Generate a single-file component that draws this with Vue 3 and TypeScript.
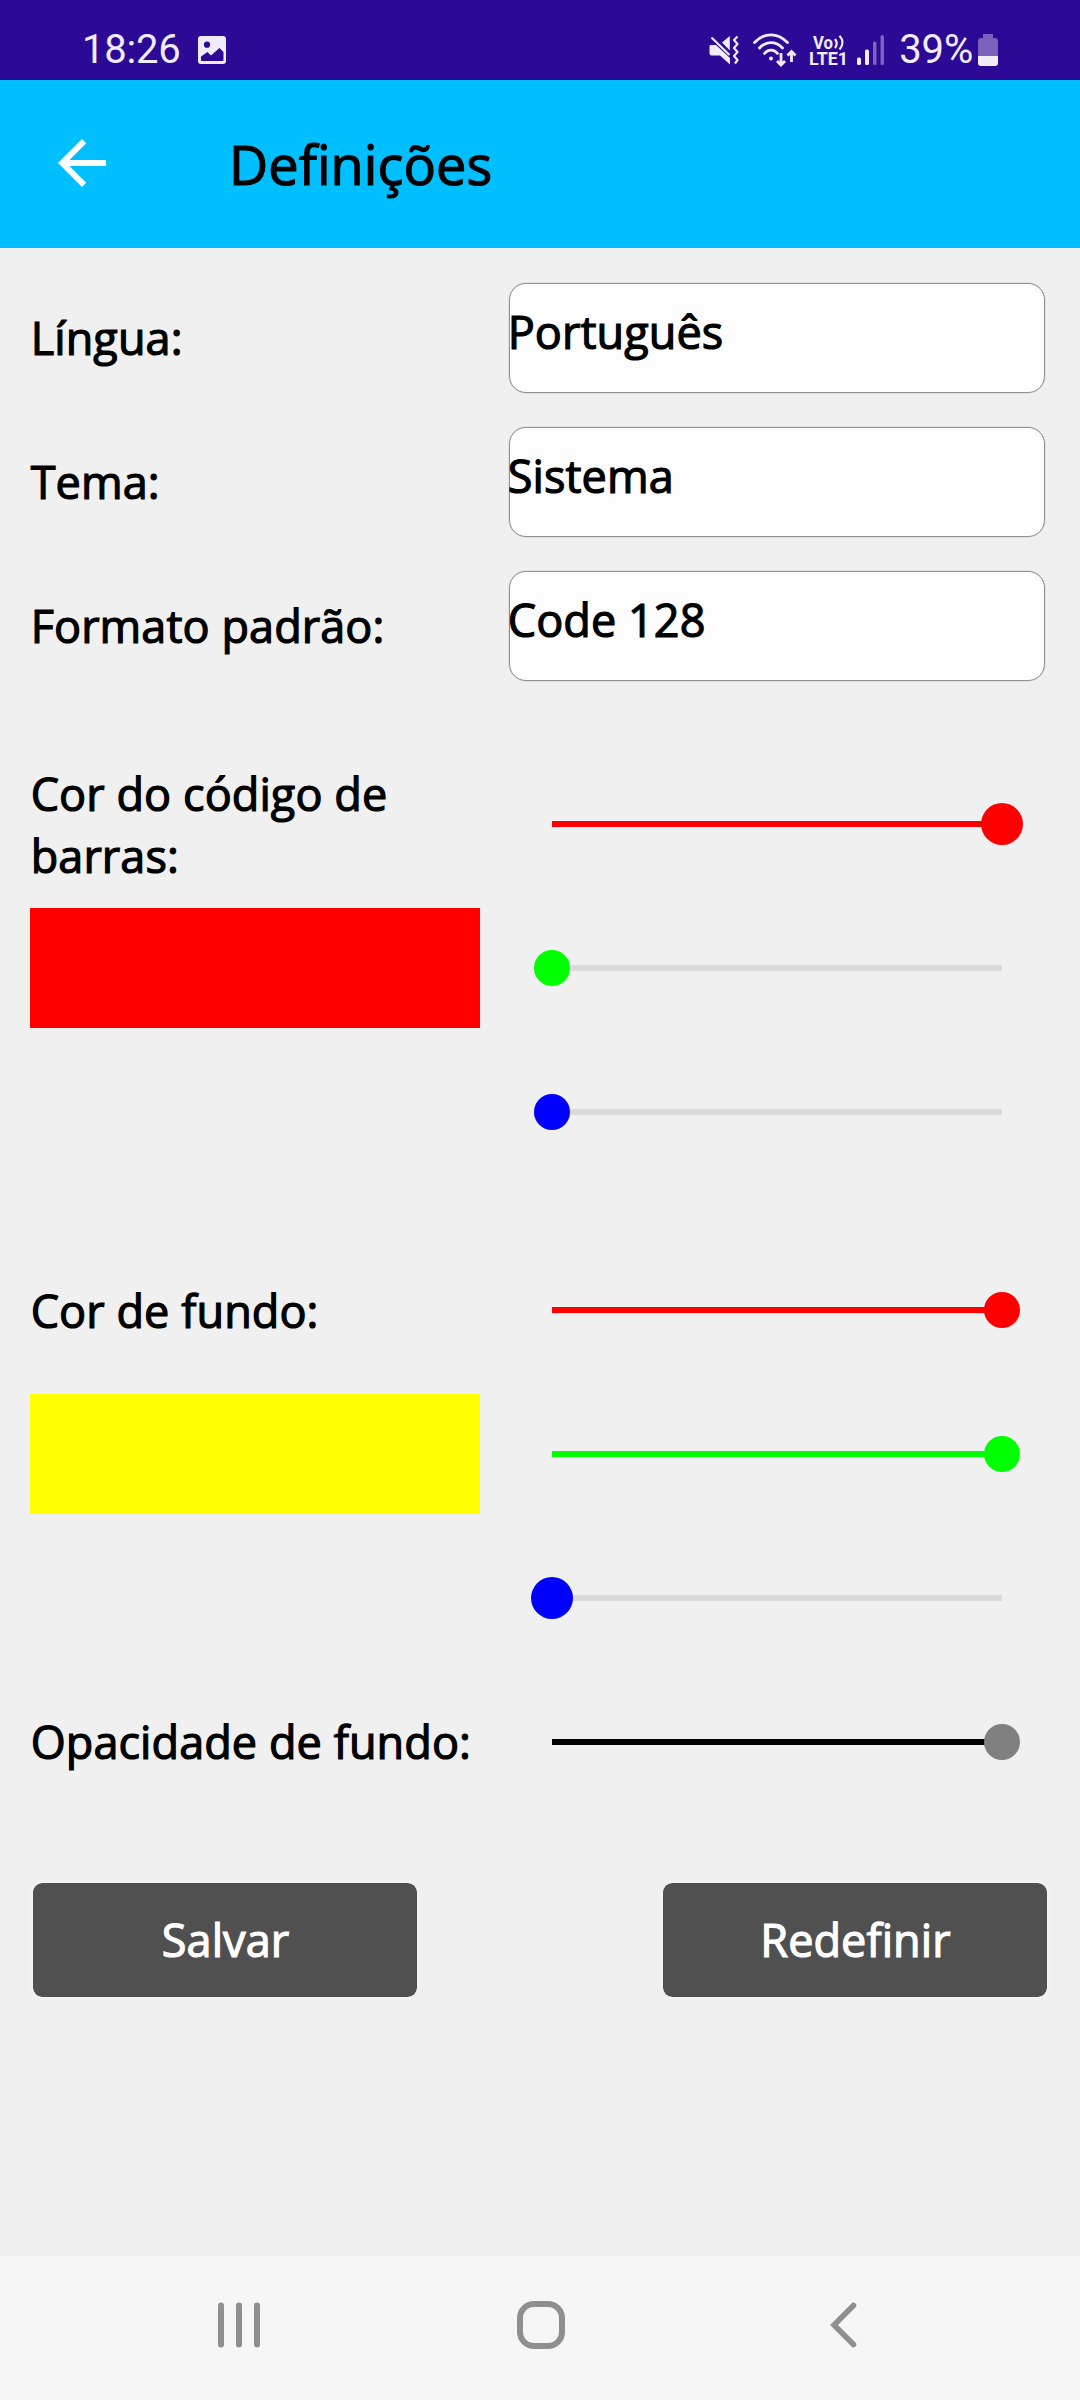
<script setup lang="ts">
interface Choice {
  label: string
  value: string
}

interface Channel {
  color: string
  track: string
  level: number
  active?: boolean
}

interface ColorGroup {
  label: string
  swatch: string
  channels: Channel[]
}

const choices: Choice[] = [
  { label: 'Língua:', value: 'Português' },
  { label: 'Tema:', value: 'Sistema' },
  { label: 'Formato padrão:', value: 'Code 128' },
]

const groups: ColorGroup[] = [
  {
    label: 'Cor do código de barras:',
    swatch: '#ff0000',
    channels: [
      { color: '#ff0000', track: '#ff0000', level: 100, active: true },
      { color: '#00ff00', track: '#00ff00', level: 0 },
      { color: '#0000ff', track: '#0000ff', level: 0 },
    ],
  },
  {
    label: 'Cor de fundo:',
    swatch: '#ffff00',
    channels: [
      { color: '#ff0000', track: '#ff0000', level: 100 },
      { color: '#00ff00', track: '#00ff00', level: 100 },
      { color: '#0000ff', track: '#0000ff', level: 0, active: true },
    ],
  },
]

const opacity: Channel = { color: '#808080', track: '#000000', level: 100 }
</script>

<template>
  <div class="screen">
    <div class="status">
      <span class="clock">18:26</span>
      <svg class="photo" width="28" height="28" viewBox="0 0 28 28">
        <path
          fill="#f0ecfb"
          fill-rule="evenodd"
          d="M3 0H25Q28 0 28 3V25Q28 28 25 28H3Q0 28 0 25V3Q0 0 3 0ZM9 5.6A3.1 3.1 0 1 0 9 11.8A3.1 3.1 0 1 0 9 5.6ZM3 20.5V24Q3 25 4 25H24.500Q25.500 25 25.500 24V16L21.500 12L13 19.500L9.500 16Z"
        />
      </svg>
      <div class="spacer"></div>
      <svg class="mute" width="30" height="30" viewBox="0 0 30 30">
        <g fill="#f0ecfb">
          <path d="M1.500 10H7L21 23V29.500L11 20.500H2.500Q0.500 20.500 0.500 18.500V12Q0.500 10 1.500 10Z" />
          <path d="M20.800 1V15.500L13 7.500Z" />
        </g>
        <path d="M2.500 2.500L20.500 20" fill="none" stroke="#f0ecfb" stroke-width="2.200" />
        <path
          d="M28.500 1.500L25 5L28.500 9L25 13L28.500 17L25 21L28.500 25L26 28.500"
          fill="none"
          stroke="#f0ecfb"
          stroke-width="2.200"
          stroke-linejoin="round"
        />
      </svg>
      <svg class="wifi" width="46" height="34" viewBox="0 0 46 34">
        <g fill="none" stroke="#f0ecfb" stroke-width="2.800" stroke-linecap="round">
          <path d="M2.500 9.500Q10 1.800 19 1.800T35.500 9.500" />
          <path d="M7.500 15Q12.500 9.600 19 9.600T30.500 15" />
          <path d="M12.500 20.500Q15 17.200 19 17.200T25.500 20.500" />
          <path d="M29 20V31.500M25 28L29 32L33 28M39.500 29V19M35.500 22.500L39.500 18.500L43.500 22.500" stroke-linecap="butt" />
        </g>
        <circle cx="19" cy="25.500" r="2" fill="#f0ecfb" />
      </svg>
      <svg class="volte" width="38" height="34" viewBox="0 0 38 34">
        <g fill="#f0ecfb" font-family="Roboto, sans-serif" font-weight="700" font-size="17.500">
          <text x="3" y="14.500" textLength="20" lengthAdjust="spacingAndGlyphs">Vo</text>
          <text x="-1" y="31.300" textLength="39" lengthAdjust="spacingAndGlyphs">LTE1</text>
        </g>
        <path d="M25 5Q28.500 9.500 25 14M29.500 1.800Q35.500 8.500 29.500 15.500" fill="none" stroke="#f0ecfb" stroke-width="2.200" />
      </svg>
      <svg class="signal" width="28" height="30" viewBox="0 0 28 30">
        <g fill="#f0ecfb">
          <rect x="0" y="22.500" width="4" height="7.500" rx="1.500" />
          <rect x="8" y="14.500" width="4" height="15.500" rx="1.500" />
          <rect x="16" y="6.500" width="3.500" height="23.500" rx="1.500" opacity=".4" />
          <rect x="23.500" y="0" width="3.500" height="30" rx="1.500" opacity=".4" />
        </g>
      </svg>
      <span class="percent">39%</span>
      <svg class="battery" width="20" height="32" viewBox="0 0 20 32">
        <path d="M5 0H15V4H17Q20 4 20 7V22H0V7Q0 4 3 4H5Z" fill="#7a61bd" />
        <path d="M0 22H20V29Q20 32 17 32H3Q0 32 0 29Z" fill="#f0ecfb" />
      </svg>
    </div>

    <header class="header">
      <svg class="back" width="72" height="72" viewBox="0 0 24 24">
        <path fill="#fff" d="M20 11H7.830l5.590-5.590L12 4l-8 8 8 8 1.410-1.410L7.830 13H20z" />
      </svg>
      <h1 class="title">Definições</h1>
    </header>

    <main class="content">
      <div v-for="choice in choices" :key="choice.label" class="row">
        <div class="label">{{ choice.label }}</div>
        <div class="field"><span>{{ choice.value }}</span></div>
      </div>

      <section v-for="group in groups" :key="group.label" class="group">
        <div v-for="(channel, i) in group.channels" :key="i" class="row">
          <div v-if="i === 0" class="label heading">{{ group.label }}</div>
          <div v-else-if="i === 1" class="swatch" :style="{ background: group.swatch }"></div>
          <div v-else class="label"></div>
          <div class="slider">
            <div class="fill" :style="{ width: channel.level + '%', background: channel.track }"></div>
            <div
              class="knob"
              :class="{ active: channel.active }"
              :style="{ left: channel.level + '%', background: channel.color }"
            ></div>
          </div>
        </div>
      </section>

      <div class="row">
        <div class="label">Opacidade de fundo:</div>
        <div class="slider">
          <div class="fill" :style="{ width: opacity.level + '%', background: opacity.track }"></div>
          <div class="knob" :style="{ left: opacity.level + '%', background: opacity.color }"></div>
        </div>
      </div>

      <div class="actions">
        <button class="button">Salvar</button>
        <button class="button">Redefinir</button>
      </div>
    </main>

    <nav class="nav">
      <svg class="recents" width="42" height="46" viewBox="0 0 42 46">
        <path d="M3 3.500V42.500M21 3.500V42.500M39 3.500V42.500" stroke="#8f8f8f" stroke-width="6" stroke-linecap="round" />
      </svg>
      <svg class="home" width="48" height="48" viewBox="0 0 48 48">
        <rect x="3" y="3" width="42" height="42" rx="14" fill="none" stroke="#8f8f8f" stroke-width="6" />
      </svg>
      <svg class="prev" width="28" height="46" viewBox="0 0 28 46">
        <path d="M23.500 3.500L4 23L23.500 42.500" fill="none" stroke="#8f8f8f" stroke-width="5.600" stroke-linecap="round" />
      </svg>
    </nav>
  </div>
</template>

<style>
body {
  margin: 0;
  background: #f0f0f0;
}
</style>

<style scoped>
.screen {
  display: flex;
  flex-direction: column;
  width: 1080px;
  height: 2400px;
  background: #f0f0f0;
  color: #000;
  font-family: 'Open Sans', 'Noto Sans', sans-serif;
  font-size: 45px;
  line-height: 61.3px;
  letter-spacing: 0.08px;
  font-variant-ligatures: none;
  -webkit-text-stroke: 1.2px currentColor;
}

.status {
  display: flex;
  box-sizing: border-box;
  height: 80px;
  padding: 0 82px;
  background: #2c0a96;
  color: #f0ecfb;
  font-family: Roboto, sans-serif;
  font-size: 40px;
  line-height: 47px;
  letter-spacing: -0.2px;
  -webkit-text-stroke: 0;
}

.status svg {
  flex: none;
  letter-spacing: 0;
}

.clock,
.percent {
  margin-top: 26px;
}

.photo {
  margin: 36px 0 0 17px;
}

.spacer {
  flex: 1;
}

.mute {
  margin: 35px 13px 0 0;
}

.wifi {
  margin: 33px 12px 0 0;
}

.volte {
  margin: 34px 9px 0 0;
  overflow: visible;
}

.signal {
  margin: 35px 14px 0 0;
}

.battery {
  margin: 34px 0 0 5px;
}

.header {
  display: flex;
  align-items: center;
  height: 168px;
  padding-left: 46px;
  background: #00bfff;
}

.back {
  margin-bottom: 2px;
}

.title {
  margin: 0 0 0 111px;
  font-size: 54px;
  font-weight: 400;
  line-height: 73px;
}

.content {
  flex: 1;
  padding: 18px 30px 0;
}

.row {
  display: flex;
  align-items: center;
  height: 144px;
}

.label {
  box-sizing: border-box;
  width: 450px;
  padding-left: 0.7px;
}

.heading {
  padding-top: 1px;
}

.field {
  box-sizing: border-box;
  width: 536px;
  height: 110px;
  margin-left: 29px;
  padding-top: 17px;
  border: 1px solid #929292;
  border-radius: 17px;
  background: #fdfdfd;
  box-shadow: 0 0 0 0.5px #d2d2d2;
}

.field span {
  display: block;
  margin-left: -2.3px;
}

.group {
  padding: 54px 0 0;
}

.swatch {
  width: 450px;
  height: 120px;
}

.slider {
  position: relative;
  width: 450px;
  height: 6px;
  margin-left: 72px;
  background: #dadada;
}

.fill {
  height: 6px;
}

.knob {
  position: absolute;
  top: 50%;
  width: 36px;
  height: 36px;
  border-radius: 50%;
  transform: translate(-50%, -50%);
}

.knob.active {
  width: 42px;
  height: 42px;
}

.actions {
  display: flex;
  justify-content: space-between;
  margin-top: 66px;
}

.button {
  width: 390px;
  height: 120px;
  padding: 0 0 0 1px;
  border: 3px solid #f2f2f2;
  border-radius: 12px;
  background: #505050;
  background-clip: padding-box;
  color: #fff;
  font: inherit;
  letter-spacing: inherit;
  -webkit-text-stroke: inherit;
}

.nav {
  display: flex;
  align-items: center;
  box-sizing: border-box;
  height: 144px;
  padding: 0 0 6px 218px;
  background: #f6f6f6;
}

.home {
  margin-left: 257px;
}

.prev {
  margin-left: 265px;
}
</style>
